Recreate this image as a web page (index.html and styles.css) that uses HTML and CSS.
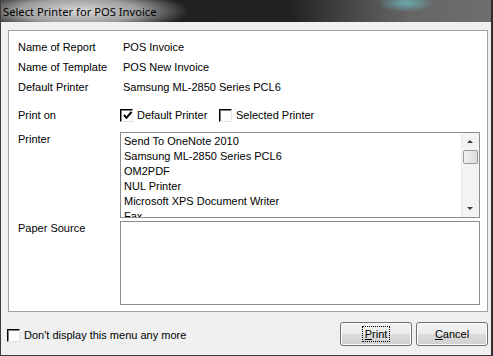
FILE: index.html
```html
<!DOCTYPE html>
<html lang="en">
<head>
    <meta charset="UTF-8">
    <title>Select Printer for POS Invoice</title>
    <link rel="stylesheet" href="styles.css">
</head>
<body>
    <div class="janela">
        <div class="titulo">
            <span class="titulo-texto">Select Printer for POS Invoice</span>
        </div>

        <div class="conteudo">
            <div class="painel">
                <div class="linha">
                    <span class="rotulo">Name of Report</span>
                    <span class="valor">POS Invoice</span>
                </div>
                <div class="linha">
                    <span class="rotulo">Name of Template</span>
                    <span class="valor">POS New Invoice</span>
                </div>
                <div class="linha">
                    <span class="rotulo">Default Printer</span>
                    <span class="valor">Samsung ML-2850 Series PCL6</span>
                </div>

                <div class="linha linha-print">
                    <span class="rotulo">Print on</span>
                    <div class="opcoes">
                        <label class="opcao opcao-default">
                            <span class="caixa marcada">
                                <svg viewBox="0 0 9 9" width="9" height="9"><path d="M1 4 L3.5 6.8 L8.5 1" fill="none" stroke="#000" stroke-width="2"/></svg>
                            </span>
                            Default Printer
                        </label>
                        <label class="opcao">
                            <span class="caixa"></span>
                            Selected Printer
                        </label>
                    </div>
                </div>

                <div class="linha linha-lista">
                    <span class="rotulo">Printer</span>
                    <div class="lista">
                        <div class="itens">
                            <div class="item">Send To OneNote 2010</div>
                            <div class="item">Samsung ML-2850 Series PCL6</div>
                            <div class="item">OM2PDF</div>
                            <div class="item">NUL Printer</div>
                            <div class="item">Microsoft XPS Document Writer</div>
                            <div class="item">Fax</div>
                        </div>
                        <div class="rolagem">
                            <span class="seta seta-cima"></span>
                            <span class="polegar"></span>
                            <span class="trilho"></span>
                            <span class="seta seta-baixo"></span>
                        </div>
                    </div>
                </div>

                <div class="linha linha-papel">
                    <span class="rotulo">Paper Source</span>
                    <div class="papel"></div>
                </div>
            </div>
        </div>

        <div class="rodape">
            <label class="opcao nao-mostrar">
                <span class="caixa"></span>
                Don't display this menu any more
            </label>
            <div class="botoes">
                <button class="botao"><span class="foco"><u>P</u>rint</span></button>
                <button class="botao"><u>C</u>ancel</button>
            </div>
        </div>
    </div>
</body>
</html>
```

FILE: styles.css
```css
body {
    margin: 0;
    padding: 0;
    background-color: #f0f0f0;
    font-family: 'Liberation Sans', Arial, sans-serif;
    font-size: 11px;
    color: #000000;
}

.janela {
    width: 493px;
    height: 356px;
    box-sizing: border-box;
    border-left: 1px solid #3c3c3c;
    border-right: 2px solid #2e2e2e;
    border-bottom: 1px solid #3c3c3c;
    background-color: #f0f0f0;
    display: flex;
    flex-direction: column;
}

/* Barra de titulo */
.titulo {
    height: 22px;
    display: flex;
    align-items: center;
    padding-left: 2px;
    background:
        radial-gradient(ellipse 110px 22px at 78px 11px, rgba(225,225,225,0.95) 0%, rgba(200,200,200,0.75) 55%, rgba(60,60,60,0) 100%),
        radial-gradient(ellipse 28px 9px at 405px 3px, rgba(110,190,195,0.8) 0%, rgba(110,190,195,0) 100%),
        linear-gradient(to right, #1e1e1e 0px, #222222 290px, #474747 350px, #666666 410px, #6e6e6e 100%);
}

.titulo-texto {
    font-family: 'Noto Sans', sans-serif;
    font-size: 11.2px;
    color: #000000;
}

.conteudo {
    padding: 8px 3px 0 7px;
}

/* Painel branco */
.painel {
    background-color: #ffffff;
    border: 1px solid #a0a0a0;
    padding: 6px 7px 6px 9px;
    display: flex;
    flex-direction: column;
}

.linha {
    display: flex;
    height: 20px;
    align-items: center;
}

.rotulo {
    width: 102px;
    flex-shrink: 0;
}

.valor {
    padding-left: 3px;
}

.linha-print {
    margin-top: 8px;
}

.opcoes {
    display: flex;
}

.opcao {
    display: flex;
    align-items: center;
    gap: 4px;
}

.opcao-default {
    width: 99px;
}

.caixa {
    width: 11px;
    height: 11px;
    background-color: #ffffff;
    border-top: 1px solid #000000;
    border-left: 1px solid #000000;
    border-right: 1px solid #e3e3e3;
    border-bottom: 1px solid #e3e3e3;
    box-shadow: inset 1px 1px 0 #808080;
    display: flex;
    align-items: center;
    justify-content: center;
}

.caixa svg {
    margin: 1px 0 0 1px;
}

/* Lista de impressoras */
.linha-lista {
    margin-top: 7px;
    height: auto;
    align-items: flex-start;
}

.linha-lista .rotulo,
.linha-papel .rotulo {
    padding-top: 1px;
}

.lista {
    flex: 1;
    height: 84px;
    border: 1px solid #8c8c8c;
    display: flex;
    overflow: hidden;
}

.itens {
    flex: 1;
    padding: 1px 0 0 3px;
}

.item {
    height: 15px;
    line-height: 15px;
}

.rolagem {
    width: 17px;
    display: flex;
    flex-direction: column;
    background-color: #f3f3f3;
    border-left: 1px solid #ececec;
}

.seta {
    height: 17px;
    position: relative;
}

.seta::after {
    content: "";
    position: absolute;
    left: 5px;
    top: 7px;
    border-left: 3px solid transparent;
    border-right: 3px solid transparent;
}

.seta-cima::after {
    border-bottom: 3px solid #3c3c3c;
}

.seta-baixo::after {
    border-top: 3px solid #3c3c3c;
}

.polegar {
    height: 14px;
    margin: 0 1px;
    border: 1px solid #9a9a9a;
    border-radius: 2px;
    background: linear-gradient(to right, #f2f2f2, #dcdcdc);
    box-sizing: border-box;
}

.trilho {
    flex: 1;
}

/* Paper source */
.linha-papel {
    margin-top: 3px;
    height: auto;
    align-items: flex-start;
}

.papel {
    flex: 1;
    height: 82px;
    border: 1px solid #8c8c8c;
    background-color: #ffffff;
}

/* Rodape */
.rodape {
    flex: 1;
    display: flex;
    align-items: center;
    justify-content: space-between;
    padding: 0 3px 0 6px;
}

.nao-mostrar {
    margin-top: 3px;
    gap: 4px;
}

.botoes {
    display: flex;
    gap: 4px;
}

.botao {
    width: 72px;
    height: 24px;
    font-family: 'Liberation Sans', Arial, sans-serif;
    font-size: 11px;
    color: #000000;
    border: 1px solid #707070;
    border-radius: 3px;
    background: linear-gradient(to bottom, #f2f2f2 0%, #ebebeb 50%, #dddddd 51%, #cfcfcf 100%);
    box-shadow: inset 0 0 0 1px #fcfcfc;
    padding: 0;
}

.foco {
    outline: 1px dotted #000000;
    outline-offset: 1px;
    padding: 0 1px;
}
```
